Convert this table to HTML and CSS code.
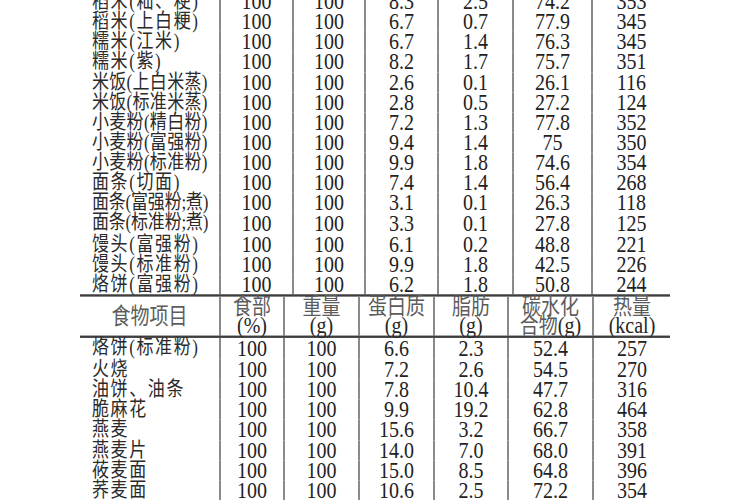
FILE: index.html
```html
<!DOCTYPE html>
<html lang="zh">
<head>
<meta charset="utf-8">
<title>食物成分表</title>
<link rel="stylesheet" href="styles.css">
</head>
<body>
<div class="sheet">
  <table class="grid top">
    <colgroup>
      <col class="w140"><col class="w73"><col class="w72"><col class="w73"><col class="w75"><col class="w79"><col class="w78">
    </colgroup>
    <tbody>
      <tr><td class="name">稻米(籼、粳)</td><td>100</td><td>100</td><td>8.3</td><td>2.5</td><td>74.2</td><td>353</td></tr>
      <tr><td class="name">稻米(上白粳)</td><td>100</td><td>100</td><td>6.7</td><td>0.7</td><td>77.9</td><td>345</td></tr>
      <tr><td class="name">糯米(江米)</td><td>100</td><td>100</td><td>6.7</td><td>1.4</td><td>76.3</td><td>345</td></tr>
      <tr><td class="name">糯米(紫)</td><td>100</td><td>100</td><td>8.2</td><td>1.7</td><td>75.7</td><td>351</td></tr>
      <tr><td class="name tight">米饭(上白米蒸)</td><td>100</td><td>100</td><td>2.6</td><td>0.1</td><td>26.1</td><td>116</td></tr>
      <tr><td class="name tight">米饭(标准米蒸)</td><td>100</td><td>100</td><td>2.8</td><td>0.5</td><td>27.2</td><td>124</td></tr>
      <tr><td class="name tight">小麦粉(精白粉)</td><td>100</td><td>100</td><td>7.2</td><td>1.3</td><td>77.8</td><td>352</td></tr>
      <tr><td class="name tight">小麦粉(富强粉)</td><td>100</td><td>100</td><td>9.4</td><td>1.4</td><td>75</td><td>350</td></tr>
      <tr><td class="name tight">小麦粉(标准粉)</td><td>100</td><td>100</td><td>9.9</td><td>1.8</td><td>74.6</td><td>354</td></tr>
      <tr><td class="name">面条(切面)</td><td>100</td><td>100</td><td>7.4</td><td>1.4</td><td>56.4</td><td>268</td></tr>
      <tr><td class="name tighter">面条(富强粉;煮)</td><td>100</td><td>100</td><td>3.1</td><td>0.1</td><td>26.3</td><td>118</td></tr>
      <tr><td class="name tighter">面条(标准粉;煮)</td><td>100</td><td>100</td><td>3.3</td><td>0.1</td><td>27.8</td><td>125</td></tr>
      <tr><td class="name">馒头(富强粉)</td><td>100</td><td>100</td><td>6.1</td><td>0.2</td><td>48.8</td><td>221</td></tr>
      <tr><td class="name">馒头(标准粉)</td><td>100</td><td>100</td><td>9.9</td><td>1.8</td><td>42.5</td><td>226</td></tr>
      <tr><td class="name">烙饼(富强粉)</td><td>100</td><td>100</td><td>6.2</td><td>1.8</td><td>50.8</td><td>244</td></tr>
    </tbody>
  </table>
  <table class="grid bottom">
    <colgroup>
      <col class="w140"><col class="w64"><col class="w75"><col class="w75"><col class="w74"><col class="w85"><col class="w77">
    </colgroup>
    <thead>
      <tr class="head">
        <th><span class="hz">食物项目</span></th>
        <th><span class="hz">食部</span><br>(%)</th>
        <th><span class="hz">重量</span><br>(g)</th>
        <th><span class="hz">蛋白质</span><br>(g)</th>
        <th><span class="hz">脂肪</span><br>(g)</th>
        <th><span class="hz">碳水化</span><br><span class="hz">合物</span>(g)</th>
        <th><span class="hz">热量</span><br>(kcal)</th>
      </tr>
    </thead>
    <tbody>
      <tr><td class="name">烙饼(标准粉)</td><td>100</td><td>100</td><td>6.6</td><td>2.3</td><td>52.4</td><td>257</td></tr>
      <tr><td class="name">火烧</td><td>100</td><td>100</td><td>7.2</td><td>2.6</td><td>54.5</td><td>270</td></tr>
      <tr><td class="name">油饼、油条</td><td>100</td><td>100</td><td>7.8</td><td>10.4</td><td>47.7</td><td>316</td></tr>
      <tr><td class="name">脆麻花</td><td>100</td><td>100</td><td>9.9</td><td>19.2</td><td>62.8</td><td>464</td></tr>
      <tr><td class="name">燕麦</td><td>100</td><td>100</td><td>15.6</td><td>3.2</td><td>66.7</td><td>358</td></tr>
      <tr><td class="name">燕麦片</td><td>100</td><td>100</td><td>14.0</td><td>7.0</td><td>68.0</td><td>391</td></tr>
      <tr><td class="name">莜麦面</td><td>100</td><td>100</td><td>15.0</td><td>8.5</td><td>64.8</td><td>396</td></tr>
      <tr><td class="name">荞麦面</td><td>100</td><td>100</td><td>10.6</td><td>2.5</td><td>72.2</td><td>354</td></tr>
    </tbody>
  </table>
</div>
</body>
</html>
```
FILE: styles.css
```css
html {
  overflow: hidden;
  background: #ffffff;
}

body {
  margin: 0;
  padding: 0;
  height: 500px;
  background: #ffffff;
}

.sheet {
  width: 590px;
  margin: -9px 0 0 80px;
  transform: scaleY(1.18);
  transform-origin: 0 0;
  color: #222222;
  font-family: "Liberation Serif", "Noto Sans CJK SC", serif;
}

.grid {
  width: 590px;
  table-layout: fixed;
  border-collapse: collapse;
}

.w140 { width: 140px; }
.w64 { width: 64px; }
.w72 { width: 72px; }
.w73 { width: 73px; }
.w74 { width: 74px; }
.w75 { width: 75px; }
.w77 { width: 77px; }
.w78 { width: 78px; }
.w79 { width: 79px; }
.w85 { width: 85px; }

.grid td,
.grid th {
  padding: 0;
  text-align: center;
  vertical-align: middle;
  white-space: nowrap;
  font-weight: normal;
  border-left: 2px solid #8a8a8a;
}

.grid td:first-child,
.grid th:first-child {
  border-left: none;
}

.top tr {
  height: 17.12px;
}

.top td {
  font-size: 20px;
  line-height: 17.12px;
}

.bottom tbody tr {
  height: 17.25px;
}

.bottom td {
  font-size: 20px;
  line-height: 17.25px;
}

.grid td.name {
  text-align: left;
  padding-left: 12px;
  font-size: 17px;
  letter-spacing: 1.6px;
  color: #2a2a2a;
}

.grid td.tight {
  letter-spacing: 0.3px;
}

.grid td.tighter {
  letter-spacing: -0.2px;
}

.head th {
  height: 32.6px;
  padding-top: 1px;
  border-top: 2px solid #3e3e3e;
  border-bottom: 2px solid #3e3e3e;
  font-size: 20px;
  line-height: 15.8px;
  color: #262626;
}

.hz {
  font-size: 19px;
  color: #5c5c5c;
}
```
